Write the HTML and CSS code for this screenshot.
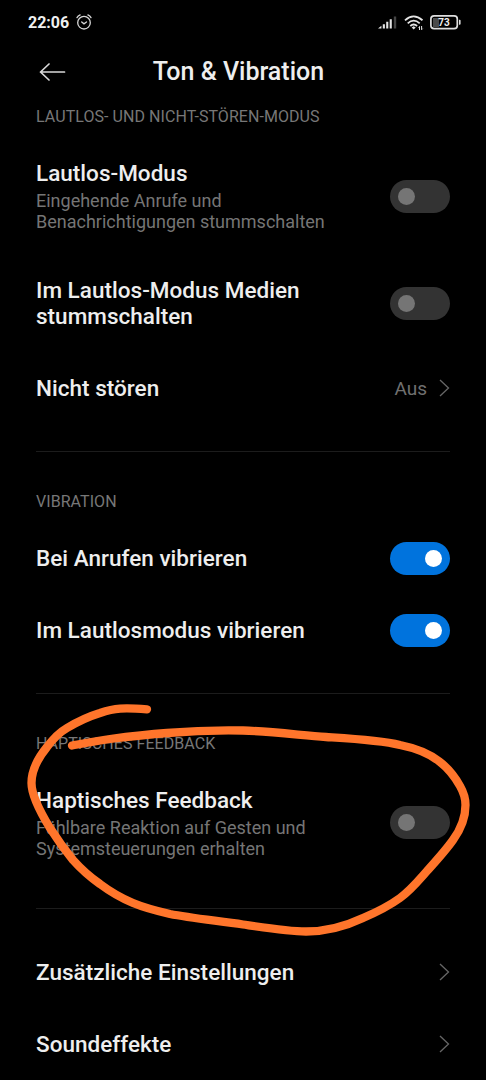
FILE: index.html
```html
<!DOCTYPE html>
<html lang="de">
<head>
<meta charset="utf-8">
<meta name="viewport" content="width=device-width, initial-scale=1">
<title>Ton &amp; Vibration</title>
<link rel="stylesheet" href="styles.css">
</head>
<body>
<div class="screen">
  <div class="status">
    <span class="clock">22:06</span>
    <svg class="alarm" width="16" height="16" viewBox="0 0 16 16" fill="none" stroke="#d6d6d6" stroke-width="1.3" stroke-linecap="round">
      <circle cx="8" cy="8.7" r="6.3"/><path d="M5.7 7.9 8 9.8l2.5-1.9M1 3.6Q2 1.7 4.1.9M15 3.6Q14 1.7 11.9.9"/>
    </svg>
    <svg class="signal" width="19" height="13" viewBox="0 0 19 13">
      <path fill="#e4e4e4" d="M0 12.5 3.4 9.8v2.7zM4.8 8.2h2.1v4.3H4.8zM8.2 5.8h2.1v6.7H8.2zM11.7 3.3h2.1v9.2h-2.1z"/><path fill="#444" d="M15.8.5h2.4v12h-2.4z"/>
    </svg>
    <svg class="wifi" width="20" height="16" viewBox="0 0 20 16" fill="none" stroke="#e4e4e4" stroke-width="1.8">
      <path d="M1 5.3Q9.5-2.5 18.5 5.3M3.7 8.3q6-5.4 12 0M6.3 11q3.4-3.1 6.8 0"/><path fill="#e4e4e4" stroke="none" d="m7.7 12.5 2-1.2 2 1.2-2 2z"/><path stroke-width="1" d="M15.5 15v-3.5l-1 1M17.6 11v3.7l1-1"/>
    </svg>
    <svg class="battery" width="31" height="15" viewBox="0 0 31 15">
      <path fill="#4a4a4a" d="M3 3h6v9H3z"/><rect x=".9" y=".9" width="26.4" height="12.7" rx="3.2" fill="none" stroke="#dedede" stroke-width="1.7"/><path fill="#dedede" d="M29 4.8h.6q1 0 1 1v2.9q0 1-1 1H29z"/>
      <text class="charge" x="14" y="10.9" text-anchor="middle">73</text>
    </svg>
  </div>
  <header class="header">
    <svg class="back" width="28" height="20" viewBox="0 0 28 20" fill="none" stroke="#d8d8d8" stroke-width="1.7" stroke-linecap="round" stroke-linejoin="round"><path d="M26.5 10H2.5M11 2 2.5 10l8.5 8"/></svg>
    <h1 class="title">Ton &amp; Vibration</h1>
  </header>
  <main class="settings">
    <section class="group">
      <h2 class="label label-first">LAUTLOS- UND NICHT-STÖREN-MODUS</h2>
      <div class="row row-detail"><div><div class="name">Lautlos-Modus</div><div class="hint">Eingehende Anrufe und<br>Benachrichtigungen stummschalten</div></div><span class="toggle"></span></div>
      <div class="row row-double"><div class="name">Im Lautlos-Modus Medien<br>stummschalten</div><span class="toggle"></span></div>
      <div class="row"><div class="name">Nicht stören</div><div class="value">Aus<svg class="chevron" width="11" height="18" viewBox="0 0 11 18"><path d="m1 1 8.5 8L1 17"/></svg></div></div>
    </section>
    <section class="group">
      <h2 class="label">VIBRATION</h2>
      <div class="row"><div class="name">Bei Anrufen vibrieren</div><span class="toggle on"></span></div>
      <div class="row"><div class="name">Im Lautlosmodus vibrieren</div><span class="toggle on"></span></div>
    </section>
    <section class="group">
      <h2 class="label">HAPTISCHES FEEDBACK</h2>
      <div class="row row-detail"><div><div class="name">Haptisches Feedback</div><div class="hint">Fühlbare Reaktion auf Gesten und<br>Systemsteuerungen erhalten</div></div><span class="toggle"></span></div>
    </section>
    <section class="group group-links">
      <div class="row"><div class="name">Zusätzliche Einstellungen</div><svg class="chevron" width="11" height="18" viewBox="0 0 11 18"><path d="m1 1 8.5 8L1 17"/></svg></div>
      <div class="row"><div class="name">Soundeffekte</div><svg class="chevron" width="11" height="18" viewBox="0 0 11 18"><path d="m1 1 8.5 8L1 17"/></svg></div>
    </section>
  </main>
  <svg class="marker" width="486" height="1080" viewBox="0 0 486 1080">
    <path d="M147 709.3C123 707.5 115 708 100 713C87 717 77 722 67 728C60 732 53 739 47 747C38 758 31.5 771 31.5 783C31.5 797 42 815 50 828C57 839 64 849 73 860C81 869 90 877 100 884C110 891.500 121 898 133 903C145 908 157 911 170 914C190 918 220 921 243 924.5C260 927 288 931.5 306 931.5C327 931.5 346 926 363 918C377 912 389 906 400 898C411 890 419 880 427 871C436 861 446 850 453 840C461 829 465.5 817 465.5 805C465.5 798 464 793 460 786C455 777 449 769 440 762C429 753 415 748 400 745C380 740 350 738.500 326 737C300 735 266 731 243 730.5C217 730 190 731 167 733C148 734.5 130 736.5 110 739C96 741 83 743.5 72 745.5"/>
  </svg>
</div>
</body>
</html>
```
FILE: styles.css
```css
* { box-sizing: border-box; }
body { margin: 0; background: #000; font-family: Roboto, sans-serif; }
.screen { position: relative; width: 486px; height: 1080px; overflow: hidden; background: #000; }
.status { display: flex; align-items: center; height: 45px; padding: 0 25px 0 28px; }
.clock { color: #f0f0f0; font-size: 16px; font-weight: 700; line-height: 20px; }
.alarm { margin-left: 7px; margin-bottom: 1px; }
.signal { margin-left: auto; margin-right: 7px; }
.wifi { margin-right: 6px; }
.charge { fill: #f0f0f0; font: 700 10px Roboto, sans-serif; }
.header { display: grid; grid-template-columns: 28px 1fr 37px; align-items: center; height: 54px; padding: 0 38px; }
.title { margin: 0; color: #eee; font-size: 25px; font-weight: 500; line-height: 30px; text-align: center; white-space: nowrap; }
.settings { padding: 0 36px; }
.group { padding-bottom: 27px; }
.group + .group { border-top: 1px solid #1c1c1c; }
.group-links { padding-top: 27px; }
.label { height: 70px; margin: 0; padding-top: 40px; color: #777; font-size: 16px; font-weight: 400; line-height: 20px; letter-spacing: .06px; }
.label-first { height: 39px; padding-top: 8px; }
.row { display: flex; align-items: center; justify-content: space-between; height: 72px; }
.row-detail { height: 116px; }
.row-double { height: 98px; }
.group:not(:first-child) .row-detail { height: 117px; }
.name { color: #eee; font-size: 22.5px; font-weight: 500; line-height: 26px; letter-spacing: .02px; white-space: nowrap; }
.hint { margin-top: 4px; color: #757575; font-size: 18px; line-height: 21px; white-space: nowrap; }
.value { display: flex; align-items: center; gap: 12px; color: #707070; font-size: 19px; }
.chevron { fill: none; stroke: #666; stroke-width: 1.3; }
.toggle { display: flex; align-items: center; flex: none; width: 60px; height: 33px; padding: 0 8px; border-radius: 17px; background: #333; }
.toggle::before { content: ""; width: 17px; height: 17px; border-radius: 50%; background: #757575; }
.toggle.on { justify-content: flex-end; background: #0073dd; }
.toggle.on::before { background: #fff; }
.marker { position: absolute; inset: 0; fill: none; stroke: #ff752b; stroke-width: 8.3; stroke-linecap: round; stroke-linejoin: round; pointer-events: none; }
```
